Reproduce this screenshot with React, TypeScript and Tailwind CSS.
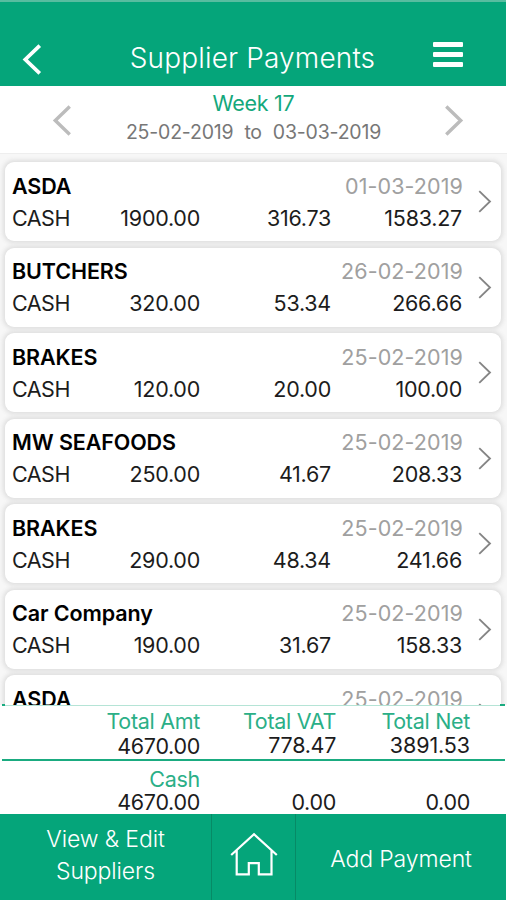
type Payment = {
    name: string;
    date: string;
    amount: string;
    vat: string;
    net: string;
};

const payments: Payment[] = [
    { name: "ASDA", date: "01-03-2019", amount: "1900.00", vat: "316.73", net: "1583.27" },
    { name: "BUTCHERS", date: "26-02-2019", amount: "320.00", vat: "53.34", net: "266.66" },
    { name: "BRAKES", date: "25-02-2019", amount: "120.00", vat: "20.00", net: "100.00" },
    { name: "MW SEAFOODS", date: "25-02-2019", amount: "250.00", vat: "41.67", net: "208.33" },
    { name: "BRAKES", date: "25-02-2019", amount: "290.00", vat: "48.34", net: "241.66" },
    { name: "Car Company", date: "25-02-2019", amount: "190.00", vat: "31.67", net: "158.33" },
];

function Chevron({ left, className, stroke }: { left?: boolean; className: string; stroke: number }) {
    return (
        <svg viewBox="0 0 18 30" fill="none" stroke="currentColor" strokeWidth={stroke} className={className}>
            <path d={left ? "M16.5 1.5L2.5 15L16.5 28.5" : "M1.5 1.5L15.5 15L1.5 28.5"} />
        </svg>
    );
}

function PaymentCard({ payment }: { payment: Payment }) {
    return (
        <div className="h-[79px] shrink-0 rounded-[9px] bg-white shadow-[0_0_4px_2px_#dedede] flex items-center pl-[7px] pr-[9px]">
            <div className="w-[451px]">
                <div className="flex justify-between h-8 items-center">
                    <span className="font-semibold text-black tracking-[-0.1px]">{payment.name}</span>
                    <span className="text-[#a0a0a0] tracking-[0.1px]">{payment.date}</span>
                </div>
                <div className="flex h-8 items-center text-[#1c1c1c] tracking-[-0.25px]">
                    <span className="w-[70px] tracking-[-0.5px]">CASH</span>
                    <span className="w-[118px] text-right">{payment.amount}</span>
                    <span className="w-[131px] text-right">{payment.vat}</span>
                    <span className="w-[131px] text-right">{payment.net}</span>
                </div>
            </div>
            <Chevron stroke={2.4} className="ml-auto w-[14px] h-[23px] text-[#858585]" />
        </div>
    );
}

export default function App() {
    return (
        <div className="w-[507px] h-[900px] overflow-hidden bg-white flex flex-col font-[Inter,'Liberation_Sans',sans-serif] text-[21.5px] leading-8 tracking-[-0.3px] whitespace-nowrap">
            <header className="h-[86px] mr-px shrink-0 bg-[#05a57a] border-t-2 border-[#58bda0] text-white flex items-start pt-[38px] pl-[22px] pr-[43px]">
                <Chevron left stroke={3.6} className="mt-[4px] w-[20px] h-[31px]" />
                <h1 className="flex-1 pl-[30px] text-center text-[28px] leading-9 font-light tracking-[0.15px]">Supplier Payments</h1>
                <div className="mt-[2px] flex flex-col gap-[5px]">
                    <div className="w-[30px] h-[5px] rounded-[1px] bg-white" />
                    <div className="w-[30px] h-[5px] rounded-[1px] bg-white" />
                    <div className="w-[30px] h-[5px] rounded-[1px] bg-white" />
                </div>
            </header>

            <div className="h-[67px] shrink-0 flex items-start justify-between pl-[52px] pr-[43px]">
                <Chevron left stroke={3.3} className="mt-[19px] w-[20px] h-[31px] text-[#bcbcbc]" />
                <div className="text-center pt-[3px] pr-[9px]">
                    <div className="h-7 leading-7 text-[#14a87c]">Week 17</div>
                    <div className="h-7 leading-[30px] text-[19.5px] text-[#777777] tracking-[-0.2px]">
                        25-02-2019<span className="mx-[11px]">to</span>03-03-2019
                    </div>
                </div>
                <Chevron stroke={3.3} className="mt-[19px] w-[20px] h-[31px] text-[#bcbcbc]" />
            </div>

            <main className="h-[552px] shrink-0 overflow-hidden bg-[#f7f7f7] border-t border-[#eeeeee] flex flex-col gap-[6.5px] pt-2 pl-[5px] pr-[6px]">
                {payments.map((payment, i) => (
                    <PaymentCard key={i} payment={payment} />
                ))}
                {/* last row slides under the totals */}
                <div className="h-[79px] shrink-0 rounded-[9px] bg-white shadow-[0_0_4px_2px_#dedede] flex items-start pt-[7.5px] pl-[7px] pr-[9px]">
                    <div className="w-[451px] flex justify-between">
                        <span className="font-semibold text-black tracking-[-0.1px]">ASDA</span>
                        <span className="text-[#a0a0a0] tracking-[0.1px]">25-02-2019</span>
                    </div>
                    <Chevron stroke={2.4} className="ml-auto mt-[20px] w-[14px] h-[23px] text-[#858585]" />
                </div>
            </main>

            <section className="h-[109px] shrink-0 bg-white text-[#1c1c1c]">
                <div className="relative h-[56px] mx-[2px] border-t border-b-[2px] border-t-[#b5e4d6] border-b-[#1aab80] flex pt-[2px]">
                    <div className="absolute -top-[2px] left-0 w-[3px] h-[2px] bg-[#1aab80]" />
                    <div className="absolute -top-[2px] right-0 w-[5px] h-[2px] bg-[#1aab80]" />
                    <div className="w-[198px] text-right">
                        <div className="h-[25px] leading-[27px] text-[#2baf87]">Total Amt</div>
                        <div className="h-[25px] leading-[27px]">4670.00</div>
                    </div>
                    <div className="w-[136px] text-right">
                        <div className="h-[25px] leading-[27px] text-[#2baf87]">Total VAT</div>
                        <div className="h-[25px] leading-[25px]">778.47</div>
                    </div>
                    <div className="w-[134px] text-right">
                        <div className="h-[25px] leading-[27px] text-[#2baf87]">Total Net</div>
                        <div className="h-[25px] leading-[25px] tracking-[-0.1px]">3891.53</div>
                    </div>
                </div>
                <div className="flex items-end h-[53px] pl-[2px]">
                    <div className="w-[198px] text-right">
                        <div className="h-[23px] leading-[23px] text-[#2baf87]">Cash</div>
                        <div className="h-[23px] leading-[23px]">4670.00</div>
                    </div>
                    <div className="w-[136px] text-right h-[23px] leading-[23px]">0.00</div>
                    <div className="w-[134px] text-right h-[23px] leading-[23px]">0.00</div>
                </div>
            </section>

            <nav className="h-[86px] mr-px shrink-0 bg-[#05a57a] text-white text-[23px] font-light tracking-[-0.1px] flex">
                <button className="w-[212px] border-r border-[#078a66] text-center leading-8 pb-[5px]">
                    View &amp; Edit
                    <br />
                    Suppliers
                </button>
                <button className="w-[84px] border-r border-[#078a66] flex justify-center pt-[18px]">
                    <svg viewBox="0 0 48 44" fill="none" stroke="currentColor" strokeWidth="2.2" className="w-12 h-11">
                        <path d="M1.2 23L24 2.2L46.8 23M6.7 18.5V42.4H18.8V31.2H28.8V42.4H41.5V18.5" />
                    </svg>
                </button>
                <button className="flex-1 pt-[3px] text-center">Add Payment</button>
            </nav>
        </div>
    );
}
